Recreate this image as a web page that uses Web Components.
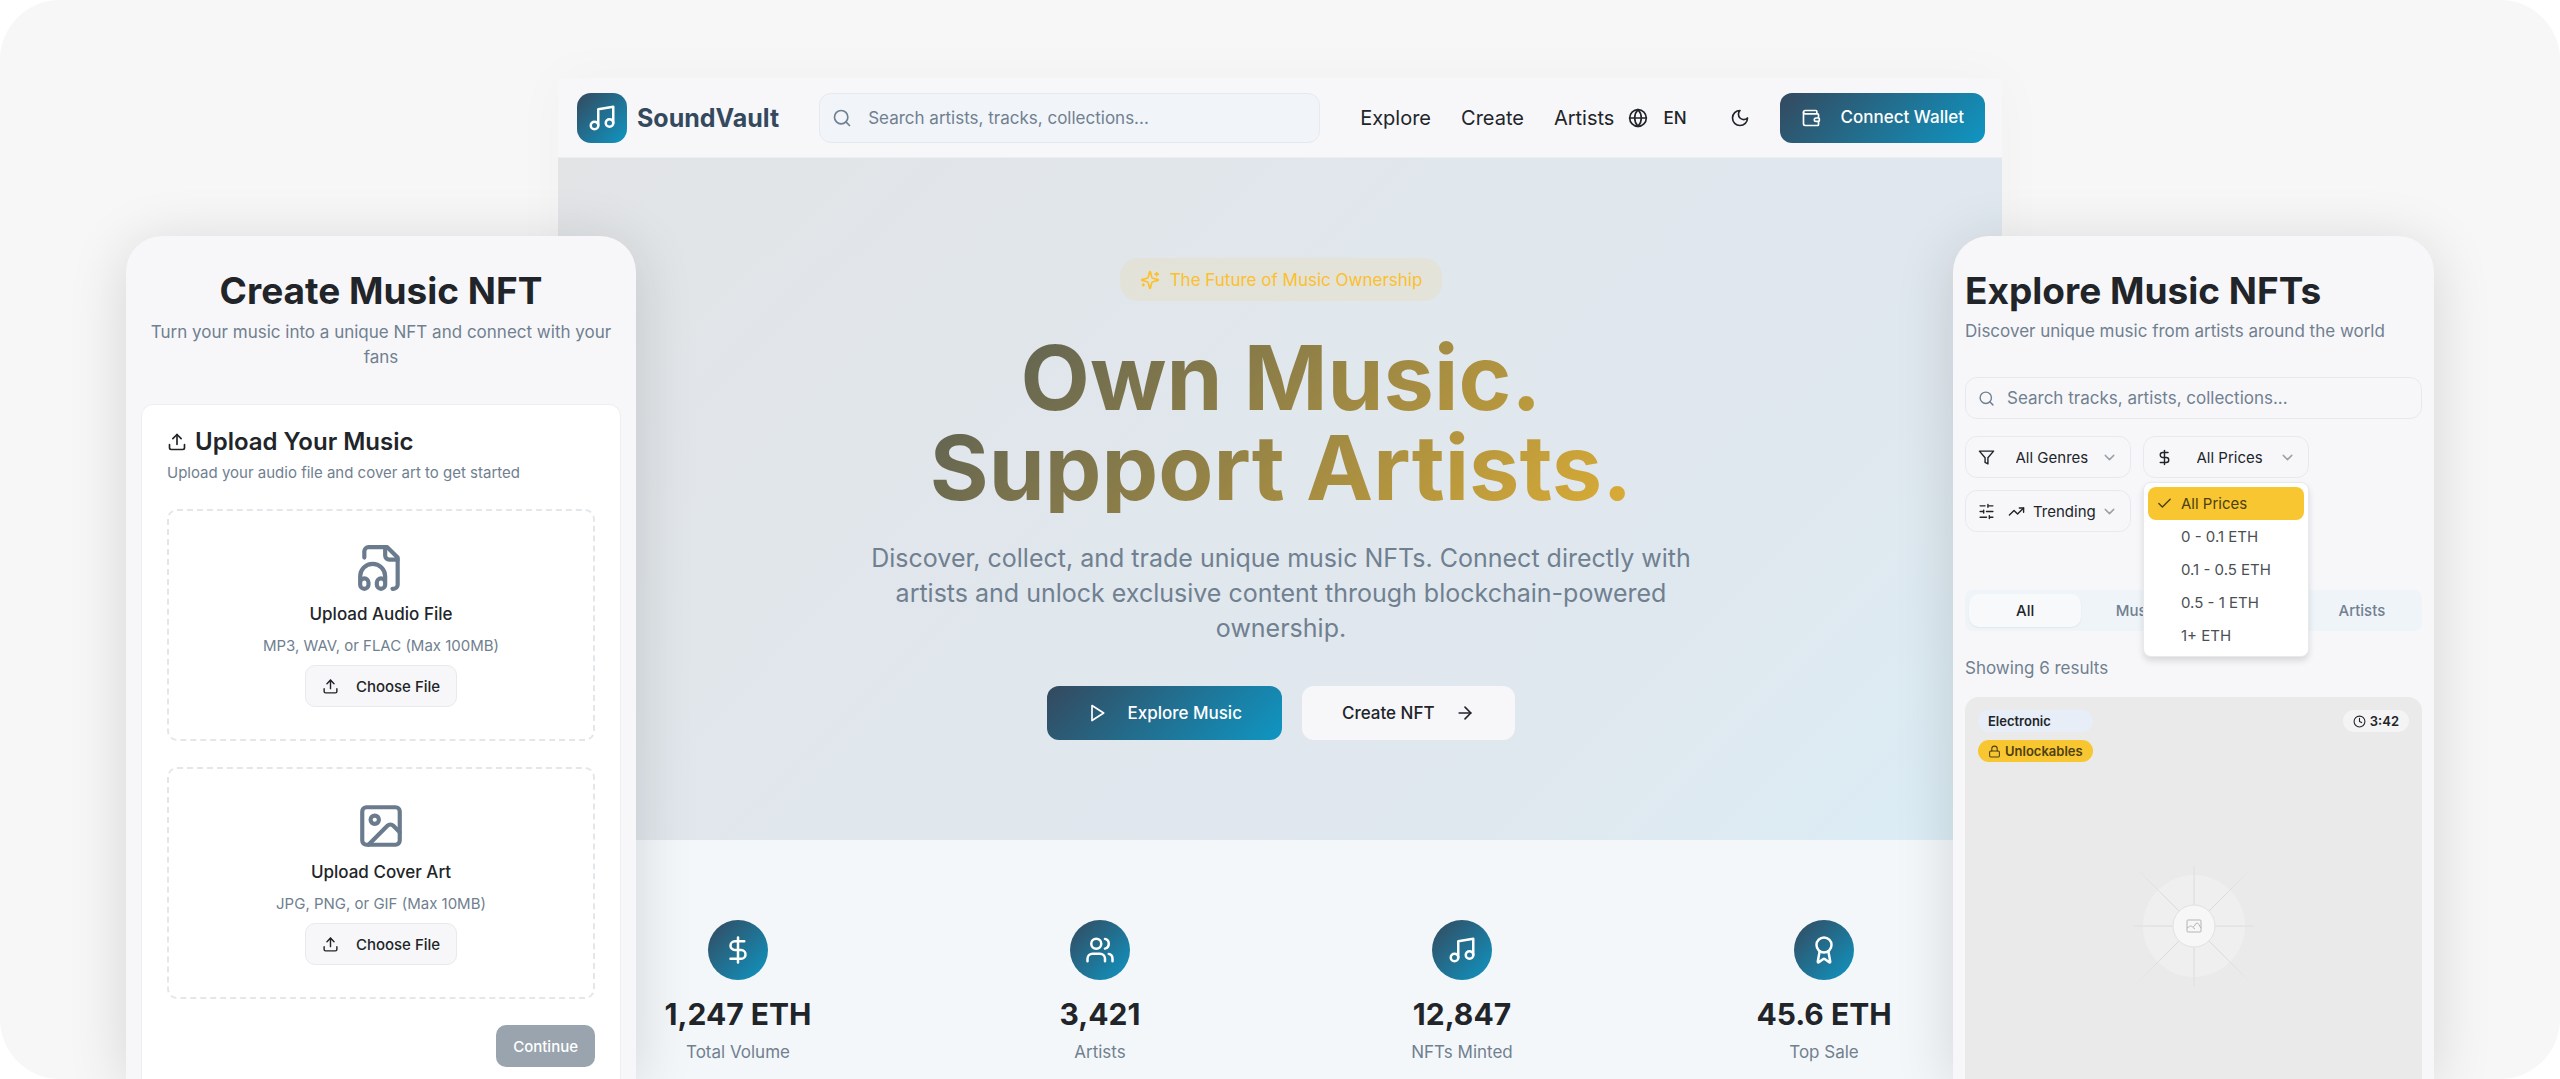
<!DOCTYPE html>
<html lang="en">
<head>
<meta charset="utf-8">
<meta name="viewport" content="width=device-width, initial-scale=1">
<title>SoundVault</title>
<style>
:root {
    --font-family-primary: Inter, "Liberation Sans", sans-serif;
    --color-font-dark: #212529;
    --color-font-muted: #708090;
    --color-brand-dark: #34495e;
    --color-brand: #0f96c3;
    --color-accent: #fbc02d;
    --color-panel: #f7f7fa;
    --color-border: #e6eaee;
    --gradient-brand: linear-gradient(135deg, #34495e, #0f96c3);
    --side-padding: 0 17px 0 19px;
}

body {
    margin: 0;
    background: #fff;
    color: var(--color-font-dark);
    font-family: var(--font-family-primary);
}
</style>
</head>
<body>
<sv-showcase>
    <sv-landing slot="main"></sv-landing>
    <sv-create slot="left"></sv-create>
    <sv-explore slot="right"></sv-explore>
</sv-showcase>

<script>
const ICONS = {
    music: '<path d="M9 18V5l12-2v13"/><circle cx="6" cy="18" r="3"/><circle cx="18" cy="16" r="3"/>',
    search: '<circle cx="11" cy="11" r="8"/><path d="m21 21-4.3-4.3"/>',
    globe: '<circle cx="12" cy="12" r="10"/><path d="M12 2a14.5 14.5 0 0 0 0 20 14.5 14.5 0 0 0 0-20"/><path d="M2 12h20"/>',
    moon: '<path d="M12 3a6 6 0 0 0 9 9 9 9 0 1 1-9-9Z"/>',
    wallet: '<path d="M19 7V4a1 1 0 0 0-1-1H5a2 2 0 0 0 0 4h15a1 1 0 0 1 1 1v4h-3a2 2 0 0 0 0 4h3a1 1 0 0 0 1-1v-2a1 1 0 0 0-1-1"/><path d="M3 5v14a2 2 0 0 0 2 2h15a1 1 0 0 0 1-1v-4"/>',
    sparkles: '<path d="M9.937 15.5A2 2 0 0 0 8.5 14.063l-6.135-1.582a.5.5 0 0 1 0-.962L8.5 9.936A2 2 0 0 0 9.937 8.5l1.582-6.135a.5.5 0 0 1 .963 0L14.063 8.5A2 2 0 0 0 15.5 9.937l6.135 1.581a.5.5 0 0 1 0 .964L15.5 14.063a2 2 0 0 0-1.437 1.437l-1.582 6.135a.5.5 0 0 1-.963 0z"/><path d="M20 3v4"/><path d="M22 5h-4"/><path d="M4 17v2"/><path d="M5 18H3"/>',
    play: '<polygon points="6 3 20 12 6 21 6 3"/>',
    arrow: '<path d="M5 12h14"/><path d="m12 5 7 7-7 7"/>',
    dollar: '<path d="M12 2v20"/><path d="M17 5H9.5a3.5 3.5 0 0 0 0 7h5a3.5 3.5 0 0 1 0 7H6"/>',
    users: '<path d="M16 21v-2a4 4 0 0 0-4-4H6a4 4 0 0 0-4 4v2"/><circle cx="9" cy="7" r="4"/><path d="M22 21v-2a4 4 0 0 0-3-3.87"/><path d="M16 3.13a4 4 0 0 1 0 7.75"/>',
    award: '<path d="m15.477 12.89 1.515 8.526a.5.5 0 0 1-.81.47l-3.58-2.687a1 1 0 0 0-1.197 0l-3.586 2.686a.5.5 0 0 1-.81-.469l1.514-8.526"/><circle cx="12" cy="8" r="6"/>',
    upload: '<path d="M12 3v12"/><path d="m17 8-5-5-5 5"/><path d="M21 15v4a2 2 0 0 1-2 2H5a2 2 0 0 1-2-2v-4"/>',
    audio: '<path d="M17.5 22h.5a2 2 0 0 0 2-2V7l-5-5H6a2 2 0 0 0-2 2v3"/><path d="M14 2v4a2 2 0 0 0 2 2h4"/><path d="M2 19a2 2 0 1 1 4 0v1a2 2 0 1 1-4 0v-4a6 6 0 0 1 12 0v4a2 2 0 1 1-4 0v-1a2 2 0 1 1 4 0"/>',
    image: '<rect width="18" height="18" x="3" y="3" rx="2"/><circle cx="9" cy="9" r="2"/><path d="m21 15-3.086-3.086a2 2 0 0 0-2.828 0L6 21"/>',
    filter: '<polygon points="22 3 2 3 10 12.46 10 19 14 21 14 12.46 22 3"/>',
    sliders: '<path d="M21 4h-7M10 4H3M21 12h-9M8 12H3M21 20h-5M12 20H3M14 2v4M8 10v4M16 18v4"/>',
    trending: '<path d="M22 7 13.5 15.5 8.5 10.5 2 17"/><path d="M16 7h6v6"/>',
    chevron: '<path d="m6 9 6 6 6-6"/>',
    check: '<path d="M20 6 9 17l-5-5"/>',
    lock: '<rect width="18" height="11" x="3" y="11" rx="2"/><path d="M7 11V7a5 5 0 0 1 10 0v4"/>',
    clock: '<circle cx="12" cy="12" r="10"/><path d="M12 6v6l4 2"/>',
};

class SvElement extends HTMLElement {
    constructor() {
        super();
        this.attachShadow({ mode: 'open' });
        let template = document.createElement('template');
        template.innerHTML = this.render();
        this.shadowRoot.appendChild(template.content.cloneNode(true));
    }
}

class SvIcon extends HTMLElement {
    connectedCallback() {
        if (this.shadowRoot) return;
        this.attachShadow({ mode: 'open' });
        this.shadowRoot.innerHTML = `
<style>
:host {
    display: block;
    flex: none;
    width: var(--icon-size, 20px);
    height: var(--icon-size, 20px);
}

svg {
    display: block;
    width: 100%;
    height: 100%;
    fill: none;
    stroke: currentColor;
    stroke-width: 2;
    stroke-linecap: round;
    stroke-linejoin: round;
}
</style>
<svg viewBox="0 0 24 24" aria-hidden="true">${ICONS[this.getAttribute('name')]}</svg>
`;
    }
}

class SvButton extends SvElement {
    render() {
        return `
<style>
:host {
    display: block;
}

.btn {
    display: flex;
    align-items: center;
    justify-content: center;
    gap: var(--button-gap, 20px);
    box-sizing: border-box;
    width: 100%;
    height: var(--button-height, 50px);
    padding: 0 var(--button-padding, 20px);
    border: 1px solid var(--button-border, transparent);
    border-radius: var(--button-radius, 12px);
    background: var(--button-bg, var(--color-panel)) border-box;
    color: var(--button-color, var(--color-font-dark));
    font: 500 var(--button-font-size, 17px)/1 var(--font-family-primary);
    white-space: nowrap;
    cursor: pointer;
}

:host([kind=primary]) .btn {
    --button-bg: var(--gradient-brand);
    --button-color: #fff;
}
</style>
<button class="btn" type="button"><slot></slot></button>
`;
    }
}

class SvSearch extends HTMLElement {
    connectedCallback() {
        if (this.shadowRoot) return;
        let hint = this.getAttribute('hint');
        this.attachShadow({ mode: 'open' });
        this.shadowRoot.innerHTML = `
<style>
:host {
    display: block;
}

label {
    display: flex;
    align-items: center;
    gap: var(--search-gap, 16px);
    box-sizing: border-box;
    height: var(--search-height, 50px);
    padding: 0 12px;
    border: 1px solid var(--color-border);
    border-radius: 12px;
    background: var(--search-bg, transparent);
    color: var(--color-font-muted);
}

input {
    flex: 1;
    min-width: 0;
    padding: 0;
    border: 0;
    outline: none;
    background: none;
    color: var(--color-font-dark);
    font: 400 17px/24px var(--font-family-primary);
}

input::placeholder {
    color: var(--color-font-muted);
    opacity: 1;
}
</style>
<label><sv-icon name="search"></sv-icon><input type="search" placeholder="${hint}" aria-label="${hint}"></label>
`;
    }
}

// Canvas with the landing window in the middle and a phone panel over each side of it
class SvShowcase extends SvElement {
    render() {
        return `
<style>
:host {
    display: grid;
    grid-template-columns: 126fr 432fr 78fr 1317fr 49fr 432fr 126fr;
    grid-template-rows: minmax(0, 1fr);
    height: 100vh;
    overflow: hidden;
    border-radius: 60px;
    background: #f7f7f7;
}

slot {
    display: block;
    grid-row: 1;
    min-width: 0;
}

slot[name=main] {
    grid-column: 3 / 6;
    margin-top: 78px;
    background: var(--color-panel);
    box-shadow: 0 0 50px rgba(0, 0, 0, .03);
}

slot[name=left],
slot[name=right] {
    margin-top: 236px;
    border-radius: 36px 36px 0 0;
    background: var(--color-panel);
    box-shadow: 0 8px 60px rgba(0, 0, 0, .14);
}

slot[name=left] {
    grid-column: 2 / 4;
}

slot[name=right] {
    grid-column: 5 / 7;
}
</style>
<slot name="main"></slot>
<slot name="left"></slot>
<slot name="right"></slot>
`;
    }
}

class SvNavbar extends SvElement {
    render() {
        return `
<style>
:host {
    display: flex;
    align-items: center;
    gap: 40px;
    box-sizing: border-box;
    height: 80px;
    padding: var(--side-padding);
    border-bottom: 1px solid #eceff2;
}

.brand {
    display: flex;
    align-items: center;
    gap: 10px;
    color: var(--color-brand-dark);
    font-size: 25px;
    font-weight: 700;
    text-decoration: none;
}

.logo {
    display: grid;
    place-items: center;
    width: 50px;
    height: 50px;
    border-radius: 14px;
    background: var(--gradient-brand);
    color: #fff;
    --icon-size: 30px;
}

sv-search {
    flex: 1;
    --search-bg: #f1f4f8;
}

nav {
    display: flex;
    gap: 30px;
}

nav a {
    color: var(--color-font-dark);
    font-size: 20px;
    text-decoration: none;
}

.actions {
    display: flex;
    align-items: center;
    margin-left: -26px;
}

.plain {
    display: flex;
    align-items: center;
    gap: 15px;
    padding: 0;
    border: 0;
    background: none;
    color: var(--color-font-dark);
    font: 500 17px/24px var(--font-family-primary);
}

.moon {
    padding: 0 30px 0 43px;
}
</style>
<a class="brand" href="#"><span class="logo"><sv-icon name="music"></sv-icon></span>SoundVault</a>
<sv-search hint="Search artists, tracks, collections..."></sv-search>
<nav>
    <a href="#explore">Explore</a>
    <a href="#create">Create</a>
    <a href="#artists">Artists</a>
</nav>
<div class="actions">
    <button class="plain" type="button"><sv-icon name="globe"></sv-icon>EN</button>
    <button class="plain moon" type="button" aria-label="Dark mode"><sv-icon name="moon"></sv-icon></button>
    <sv-button kind="primary"><sv-icon name="wallet"></sv-icon>Connect Wallet</sv-button>
</div>
`;
    }
}

class SvHero extends SvElement {
    render() {
        return `
<style>
:host {
    display: flex;
    flex-direction: column;
    align-items: center;
    padding: var(--side-padding);
    background: linear-gradient(135deg, #e2e4e6, #e0e7ed 45%, #e0e8ef 75%, #daedf5);
    text-align: center;
}

.badge {
    display: flex;
    align-items: center;
    gap: 10px;
    height: 43px;
    margin-top: 100px;
    padding: 0 20px;
    border-radius: 18px;
    background: rgba(251, 192, 45, .1);
    color: var(--color-accent);
    font-size: 17px;
}

h1 {
    width: 100%;
    max-width: 1120px;
    margin: 32px 0 28px;
    background: linear-gradient(135deg, var(--color-brand-dark), var(--color-accent));
    background-clip: text;
    -webkit-background-clip: text;
    color: transparent;
    font-size: 90px;
    font-weight: 700;
    line-height: 90px;
}

p {
    max-width: 840px;
    margin: 0 0 40px;
    color: var(--color-font-muted);
    font-size: 25px;
    line-height: 35px;
}

.actions {
    display: flex;
    gap: 20px;
    margin-bottom: 100px;
    --button-height: 54px;
    --button-padding: 39px;
}
</style>
<div class="badge"><sv-icon name="sparkles"></sv-icon>The Future of Music Ownership</div>
<h1>Own Music.<br>Support Artists.</h1>
<p>Discover, collect, and trade unique music NFTs. Connect directly with artists and unlock exclusive content through blockchain-powered ownership.</p>
<div class="actions">
    <sv-button kind="primary"><sv-icon name="play"></sv-icon>Explore Music</sv-button>
    <sv-button>Create NFT<sv-icon name="arrow"></sv-icon></sv-button>
</div>
`;
    }
}

class SvStat extends SvElement {
    render() {
        return `
<style>
:host {
    display: flex;
    flex-direction: column;
    align-items: center;
}

.circle {
    display: grid;
    place-items: center;
    width: 60px;
    height: 60px;
    margin-bottom: 14px;
    border-radius: 50%;
    background: var(--gradient-brand);
    color: #fff;
    --icon-size: 30px;
}

.value {
    margin-bottom: 6px;
    font-size: 30px;
    font-weight: 700;
    line-height: 40px;
}

.label {
    color: var(--color-font-muted);
    font-size: 17px;
    line-height: 25px;
}
</style>
<div class="circle"><slot name="icon"></slot></div>
<div class="value"><slot name="value"></slot></div>
<div class="label"><slot></slot></div>
`;
    }
}

class SvLanding extends SvElement {
    render() {
        return `
<style>
:host {
    display: flex;
    flex-direction: column;
    height: 100%;
}

.stats {
    flex: 1;
    display: grid;
    grid-template-columns: repeat(4, 1fr);
    align-content: start;
    gap: 40px;
    padding: var(--side-padding);
    padding-top: 80px;
    background: #f4f7f9;
}
</style>
<sv-navbar></sv-navbar>
<sv-hero></sv-hero>
<div class="stats">
    <sv-stat><sv-icon slot="icon" name="dollar"></sv-icon><span slot="value">1,247 ETH</span>Total Volume</sv-stat>
    <sv-stat><sv-icon slot="icon" name="users"></sv-icon><span slot="value">3,421</span>Artists</sv-stat>
    <sv-stat><sv-icon slot="icon" name="music"></sv-icon><span slot="value">12,847</span>NFTs Minted</sv-stat>
    <sv-stat><sv-icon slot="icon" name="award"></sv-icon><span slot="value">45.6 ETH</span>Top Sale</sv-stat>
</div>
`;
    }
}

class SvDropzone extends SvElement {
    render() {
        return `
<style>
:host {
    display: flex;
    flex-direction: column;
    align-items: center;
    gap: 8px;
    padding: 32px;
    border: 2px dashed #e3e7ea;
    border-radius: 10px;
}

.icon {
    color: #6b7b8e;
    --icon-size: 50px;
}

.title {
    font-size: 17px;
    font-weight: 500;
    line-height: 26px;
}

.hint {
    color: var(--color-font-muted);
    font-size: 15px;
    line-height: 22px;
}

sv-button {
    --icon-size: 17px;
    --button-border: var(--color-border);
    --button-gap: 17px;
    --button-padding: 16px;
}
</style>
<div class="icon"><slot name="icon"></slot></div>
<div class="title"><slot name="title"></slot></div>
<div class="hint"><slot></slot></div>
<sv-button><sv-icon name="upload"></sv-icon>Choose File</sv-button>
`;
    }
}

class SvCreate extends SvElement {
    render() {
        return `
<style>
:host {
    display: block;
    padding: 34px 15px 0;
    --button-height: 42px;
    --button-font-size: 15px;
    --button-radius: 10px;
}

h1 {
    margin: 0 0 9px;
    font-size: 37px;
    line-height: 41px;
    text-align: center;
}

.lead {
    margin: 0 0 34px;
    color: var(--color-font-muted);
    font-size: 17px;
    line-height: 25px;
    text-align: center;
}

.card {
    display: flex;
    flex-direction: column;
    gap: 26px;
    padding: 25px;
    border: 1px solid #eceef1;
    border-radius: 12px;
    background: #fff;
}

h2 {
    display: flex;
    align-items: center;
    gap: 8px;
    margin: 0 0 8px;
    font-size: 24px;
    font-weight: 600;
    line-height: 24px;
}

.card p {
    margin: 0;
    color: var(--color-font-muted);
    font-size: 15px;
    line-height: 21px;
}

.next {
    align-self: flex-end;
    --button-bg: #9aa4ae;
    --button-color: #fff;
    --button-padding: 16px;
}
</style>
<h1>Create Music NFT</h1>
<p class="lead">Turn your music into a unique NFT and connect with your fans</p>
<div class="card">
    <header>
        <h2><sv-icon name="upload"></sv-icon>Upload Your Music</h2>
        <p>Upload your audio file and cover art to get started</p>
    </header>
    <sv-dropzone><sv-icon slot="icon" name="audio"></sv-icon><span slot="title">Upload Audio File</span>MP3, WAV, or FLAC (Max 100MB)</sv-dropzone>
    <sv-dropzone><sv-icon slot="icon" name="image"></sv-icon><span slot="title">Upload Cover Art</span>JPG, PNG, or GIF (Max 10MB)</sv-dropzone>
    <sv-button class="next">Continue</sv-button>
</div>
`;
    }
}

class SvFilter extends HTMLElement {
    connectedCallback() {
        if (this.shadowRoot) return;
        let extra = this.getAttribute('mark');
        this.attachShadow({ mode: 'open' });
        this.shadowRoot.innerHTML = `
<style>
:host {
    display: block;
    position: relative;
    --icon-size: 17px;
}

label {
    display: flex;
    align-items: center;
    justify-content: space-between;
    box-sizing: border-box;
    height: 42px;
    padding: 0 12px;
    border: 1px solid var(--color-border);
    border-radius: 12px;
}

.lead {
    margin-right: 8px;
}

.value {
    display: flex;
    align-items: center;
    gap: 8px;
}

select {
    appearance: none;
    padding: 0;
    border: 0;
    outline: none;
    background: none;
    color: var(--color-font-dark);
    font: 400 15px/21px var(--font-family-primary);
}

.chevron {
    color: #9aa1a8;
}
</style>
<label>
    <sv-icon class="lead" name="${this.getAttribute('icon')}"></sv-icon>
    <span class="value">${extra ? `<sv-icon name="${extra}"></sv-icon>` : ''}<select aria-label="${this.getAttribute('label')}"><option>${this.getAttribute('value')}</option></select></span>
    <sv-icon class="chevron" name="chevron"></sv-icon>
</label>
<slot></slot>
`;
    }
}

class SvMenu extends SvElement {
    render() {
        return `
<style>
:host {
    position: absolute;
    z-index: 1;
    top: calc(100% + 4px);
    left: 0;
    right: 0;
    box-sizing: border-box;
    padding: 4px;
    border: 1px solid var(--color-border);
    border-radius: 8px;
    background: #fff;
    box-shadow: 0 4px 6px rgba(0, 0, 0, .12);
    --icon-size: 17px;
}

ul {
    margin: 0;
    padding: 0;
    list-style: none;
}

li {
    display: flex;
    align-items: center;
    height: 33px;
    padding-left: 33px;
    border-radius: 8px;
    color: #4b4f53;
    font-size: 15px;
}

li[aria-selected=true] {
    gap: 8px;
    padding-left: 8px;
    background: #f8c630;
    color: #4d4012;
}
</style>
<ul role="listbox" aria-label="Price">
    <li role="option" aria-selected="true"><sv-icon name="check"></sv-icon>All Prices</li>
    <li role="option">0 - 0.1 ETH</li>
    <li role="option">0.1 - 0.5 ETH</li>
    <li role="option">0.5 - 1 ETH</li>
    <li role="option">1+ ETH</li>
</ul>
`;
    }
}

class SvArtwork extends SvElement {
    render() {
        return `
<style>
:host {
    display: grid;
    grid-template-areas: "stack";
    aspect-ratio: 1;
    border-radius: 14px;
    background: #e9eae9;
    font-size: 13px;
    font-weight: 600;
    --icon-size: 13px;
}

svg {
    grid-area: stack;
    place-self: center;
    width: 124px;
    height: 124px;
}

.badges {
    grid-area: stack;
    display: flex;
    align-items: flex-start;
    justify-content: space-between;
    padding: 13px;
}

.tags {
    display: flex;
    flex-direction: column;
    gap: 8px;
}

.tag {
    display: flex;
    align-items: center;
    gap: 4px;
    height: 22px;
    padding: 0 10px;
    border-radius: 11px;
}

.genre {
    background: #e8eef7;
}

.locked {
    background: #f8c630;
    color: #4d4012;
}

.time {
    background: #f4f4f5;
}
</style>
<svg viewBox="-62 -62 124 124" fill="none" aria-hidden="true">
    <defs>
        <radialGradient id="fade" gradientUnits="userSpaceOnUse" cx="0" cy="0" r="84">
            <stop offset=".5" stop-color="#dadada"/>
            <stop offset="1" stop-color="#dadada" stop-opacity="0"/>
        </radialGradient>
    </defs>
    <circle r="51" fill="#efefef"/>
    <path d="M.1-60 0 60M-60 0 60 .1M-60-60 60 60M60-60-60 60" stroke="url(#fade)"/>
    <circle r="21" fill="#f7f7f7" stroke="#e2e2e2"/>
    <rect x="-7" y="-6" width="14" height="12" rx="1" stroke="#b5b5b5"/>
    <path d="M-7 2C-5 1-4 0-3 0S-1 2 1 3M-1 1C1 1 1-3 3-3S5 0 7 2" stroke="#b5b5b5"/>
</svg>
<div class="badges">
    <div class="tags">
        <span class="tag genre">Electronic</span>
        <span class="tag locked"><sv-icon name="lock"></sv-icon>Unlockables</span>
    </div>
    <span class="tag time"><sv-icon name="clock"></sv-icon>3:42</span>
</div>
`;
    }
}

class SvExplore extends SvElement {
    render() {
        return `
<style>
:host {
    display: block;
    padding: 34px 12px 0;
    --search-height: 42px;
    --search-gap: 12px;
    --icon-size: 17px;
}

h1 {
    margin: 0 0 8px;
    font-size: 37px;
    line-height: 41px;
}

p {
    margin: 0;
    color: var(--color-font-muted);
    font-size: 17px;
    line-height: 25px;
}

sv-search {
    margin: 33px 0 17px;
}

.filters {
    display: flex;
    flex-wrap: wrap;
    gap: 12px;
}

sv-filter {
    width: 166px;
}

.tabs {
    display: grid;
    grid-template-columns: repeat(4, 1fr);
    margin: 58px 0 25px;
    padding: 4px;
    border-radius: 8px;
    background: #eff4f8;
}

.tab {
    height: 33px;
    padding: 0;
    border: 0;
    border-radius: 10px;
    background: none;
    color: var(--color-font-muted);
    font: 500 15px/21px var(--font-family-primary);
}

.tab[aria-selected=true] {
    background: #f8f9fb;
    box-shadow: 0 1px 2px rgba(0, 0, 0, .06);
    color: var(--color-font-dark);
}

sv-artwork {
    margin-top: 16px;
}
</style>
<h1>Explore Music NFTs</h1>
<p>Discover unique music from artists around the world</p>
<sv-search hint="Search tracks, artists, collections..."></sv-search>
<div class="filters">
    <sv-filter icon="filter" label="Genre" value="All Genres"></sv-filter>
    <sv-filter icon="dollar" label="Price" value="All Prices"><sv-menu></sv-menu></sv-filter>
    <sv-filter icon="sliders" label="Sort" mark="trending" value="Trending"></sv-filter>
</div>
<div class="tabs" role="tablist">
    <button class="tab" type="button" role="tab" aria-selected="true">All</button>
    <button class="tab" type="button" role="tab">Music</button>
    <button class="tab" type="button" role="tab" aria-label="Collections"></button>
    <button class="tab" type="button" role="tab">Artists</button>
</div>
<p>Showing 6 results</p>
<sv-artwork></sv-artwork>
`;
    }
}

customElements.define('sv-icon', SvIcon);
customElements.define('sv-button', SvButton);
customElements.define('sv-search', SvSearch);
customElements.define('sv-navbar', SvNavbar);
customElements.define('sv-hero', SvHero);
customElements.define('sv-stat', SvStat);
customElements.define('sv-landing', SvLanding);
customElements.define('sv-dropzone', SvDropzone);
customElements.define('sv-create', SvCreate);
customElements.define('sv-filter', SvFilter);
customElements.define('sv-menu', SvMenu);
customElements.define('sv-artwork', SvArtwork);
customElements.define('sv-explore', SvExplore);
customElements.define('sv-showcase', SvShowcase);
</script>
</body>
</html>
